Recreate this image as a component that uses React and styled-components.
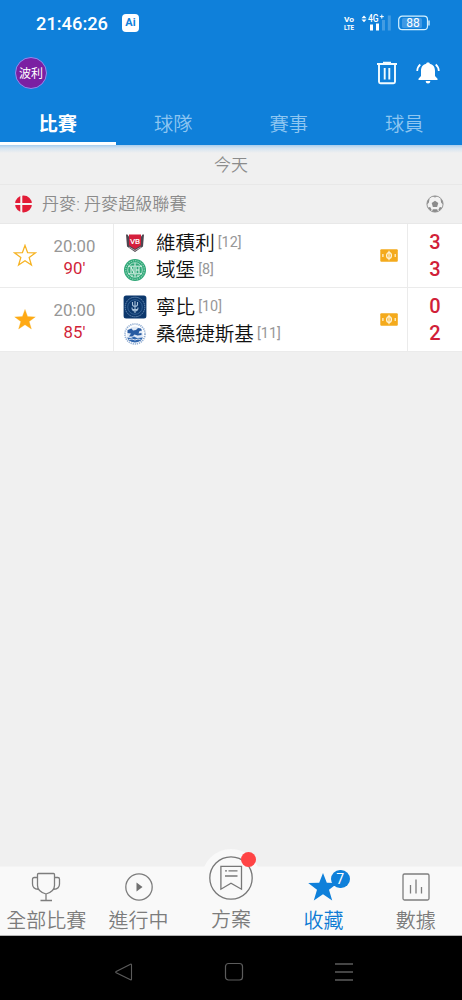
import React from 'react';
import styled, { createGlobalStyle } from 'styled-components';

const GlobalStyle = createGlobalStyle`
  * {
    box-sizing: border-box;
  }
  body {
    margin: 0;
    background: #f0f0f0;
    font-family: Roboto, "Noto Sans CJK TC", sans-serif;
    font-weight: 350;
  }
  svg {
    display: block;
    flex: none;
  }
`;

const Screen = styled.div`
  width: 462px;
  height: 1000px;
  display: flex;
  flex-direction: column;
  overflow: hidden;
  background: #f0f0f0;
`;

const Header = styled.header`
  height: 145px;
  flex: none;
  display: flex;
  flex-direction: column;
  background: #0f80da;
`;

const StatusBar = styled.div`
  height: 46px;
  padding: 0 32px 0 36px;
  display: flex;
  align-items: center;
  color: #fff;
`;

const Clock = styled.span`
  width: 86px;
  padding-top: 1px;
  font: 500 18.3px/22px Roboto, sans-serif;
  white-space: nowrap;
`;

const AiBadge = styled.span`
  width: 17px;
  height: 18px;
  border-radius: 4px;
  background: #fff;
  color: #0f80da;
  font: 700 11px/18px Roboto, sans-serif;
  text-align: center;
`;

const Signals = styled.div`
  margin-left: auto;
  display: flex;
  align-items: center;
  gap: 7px;
`;

const Toolbar = styled.div`
  height: 54px;
  padding: 0 22px 0 15px;
  display: flex;
  align-items: center;
`;

const Avatar = styled.div`
  width: 32px;
  height: 32px;
  margin-right: auto;
  border: 1.5px solid #8f8cf0;
  border-radius: 50%;
  background: #7b1fa2;
  color: #fff;
  font-size: 12px;
  font-weight: 400;
  line-height: 32px;
  text-align: center;
`;

const Actions = styled.div`
  display: flex;
  gap: 18px;
`;

const Tabs = styled.nav`
  height: 45px;
  display: grid;
  grid-template-columns: repeat(4, 1fr);
`;

const Tab = styled.div`
  height: 45px;
  padding-top: 2px;
  border-bottom: 3px solid ${({ $active }) => ($active ? '#fff' : 'transparent')};
  color: ${({ $active }) => ($active ? '#fff' : '#8ec6f1')};
  font-size: 19.3px;
  font-weight: ${({ $active }) => ($active ? 700 : 350)};
  line-height: 45px;
  text-align: center;
`;

const DayTitle = styled.div`
  height: 40px;
  flex: none;
  border-bottom: 1px solid #e8e8e8;
  background: linear-gradient(#a9cdec 0, #d3e3f1 3px, #f0f0f0 8px);
  color: #8b8b8b;
  font-size: 17px;
  line-height: 41px;
  text-align: center;
`;

const League = styled.div`
  height: 39px;
  flex: none;
  padding: 0 18px 0 14px;
  display: flex;
  align-items: center;
  border-bottom: 1px solid #e8e8e8;
  color: #8b8b8b;
  font-size: 17.1px;
  line-height: 39px;
`;

const LeagueName = styled.span`
  margin: 0 auto 0 9px;
`;

const Match = styled.div`
  height: 64px;
  flex: none;
  display: flex;
  border-bottom: 1px solid #ebebeb;
  background: #fff;
`;

const StarCell = styled.div`
  width: 49px;
  padding-top: 1px;
  display: flex;
  align-items: center;
  justify-content: center;
`;

const TimeCell = styled.div`
  width: 65px;
  padding: 11px 13px 0 0;
  border-right: 1px solid #ebebeb;
  font-size: 16.8px;
  font-weight: 400;
  line-height: 22px;
  text-align: center;
  white-space: nowrap;
`;

const Kickoff = styled.div`
  color: #979797;
`;

const Minute = styled.div`
  color: #d11f39;
`;

const Teams = styled.div`
  flex: 1;
  padding: 5px 0 0 9px;
`;

const Team = styled.div`
  height: 27px;
  display: flex;
  align-items: center;
`;

const TeamName = styled.span`
  margin: 2px 3px 0 9px;
  color: #111;
  font-size: 19.6px;
  line-height: 27px;
`;

const Rank = styled.span`
  padding-top: 1px;
  color: #979797;
  font-size: 14.4px;
  font-weight: 400;
  line-height: 26px;
`;

const TicketCell = styled.div`
  width: 27px;
  display: flex;
  align-items: center;
`;

const Scores = styled.div`
  width: 55px;
  padding-top: 5px;
  border-left: 1px solid #ebebeb;
  color: #d11f39;
  font: 500 20px/27px Roboto, sans-serif;
  text-align: center;
`;

const BottomNav = styled.nav`
  height: 70px;
  margin-top: auto;
  flex: none;
  display: grid;
  grid-template-columns: repeat(5, 1fr);
  border-top: 1px solid #f4f4f4;
  border-bottom: 1px solid #b5b5b5;
  background: #f9f9f9;
`;

const NavItem = styled.div`
  position: relative;
  height: 68px;
  display: flex;
  flex-direction: column;
  align-items: center;
  justify-content: flex-end;
  color: ${({ $active }) => ($active ? '#0f7bd4' : '#7c7c7c')};
`;

const NavLabel = styled.span`
  height: 33px;
  font-size: 20px;
  line-height: ${({ $raised }) => ($raised ? 37 : 39)}px;
  white-space: nowrap;
`;

const PlanCircle = styled.div`
  width: 58px;
  height: 58px;
  flex: none;
  margin-bottom: -5px;
  display: flex;
  align-items: center;
  justify-content: center;
  border-radius: 50%;
  background: #f9f9f9;
`;

const RedDot = styled.i`
  position: absolute;
  top: -15px;
  right: 21px;
  width: 15px;
  height: 15px;
  border-radius: 50%;
  background: #ff4445;
`;

const Count = styled.span`
  position: absolute;
  top: 3px;
  right: 20px;
  width: 19px;
  height: 18px;
  border-radius: 9px;
  background: #0f80da;
  color: #fff;
  font-size: 14px;
  font-weight: 400;
  line-height: 18px;
  text-align: center;
`;

const SystemBar = styled.div`
  height: 64px;
  flex: none;
  padding: 7px 108px 0 114px;
  display: flex;
  align-items: center;
  justify-content: space-between;
  background: #000;
`;

const STAR = 'M12 1.4l2.600 7.200 7.700.3-6.100 4.700 2.200 7.400-6.400-4.300-6.400 4.300 2.200-7.400-6.100-4.700 7.700-.3z';

const SignalIcon = () => (
  <svg width="48" height="20" viewBox="0 0 48 20" fill="#fff" fontFamily="Roboto, sans-serif" fontWeight="700">
    <text x="1" y="8.500" fontSize="7" textLength="10" lengthAdjust="spacingAndGlyphs">Vo</text>
    <text x="1" y="17.300" fontSize="7" textLength="10" lengthAdjust="spacingAndGlyphs">LTE</text>
    <path d="M18.500 5.200L21 2.500l2.500 2.700zM18.500 6.500h5L21 9.200z" />
    <g transform="translate(25 9.300) scale(.85 1)">
      <text x="0" y="0" fontSize="10" fontWeight="500">4G</text>
    </g>
    <path d="M38.800 1.600v4M36.800 3.600h4" stroke="#fff" strokeWidth="1" />
    <path d="M27 11.500h3v6h-3zM33 10.500h3v7h-3z" />
    <path d="M39 7h3v10.500h-3zM44.800 2.500h3v15h-3z" opacity=".22" />
  </svg>
);

const BatteryIcon = () => (
  <svg width="32" height="16" viewBox="0 0 32 16">
    <rect x="4" y="3" width="20" height="10" rx="1.500" fill="#3f99e4" />
    <rect x=".7" y="1.200" width="28.800" height="13.500" rx="3.500" fill="none" stroke="#d5f1ff" strokeWidth="1.200" />
    <path d="M31 5.500v5" stroke="#d5f1ff" strokeWidth="1.400" />
    <text x="15" y="12.300" fill="#fff" fontFamily="Roboto, sans-serif" fontSize="12" fontWeight="400" textAnchor="middle">88</text>
  </svg>
);

const TrashIcon = () => (
  <svg width="22" height="24" viewBox="0 0 22 24" fill="none" stroke="#f2fbff" strokeWidth="1.900">
    <path d="M1 3h20M7 1.700h8" />
    <path d="M3 3v17.800q0 1.500 1.500 1.500h13q1.500 0 1.500-1.500V3M8.700 7v11.500M13.300 7v11.500" />
  </svg>
);

const BellIcon = () => (
  <svg width="24" height="24" viewBox="0 0 24 24" fill="#fff">
    <path d="M12 1.500c1.200 0 1.700.5 1.800 1.300 3.700.8 5.200 3.600 5.200 7.100v5l2.500 2.800V19h-19v-1.300L5 14.900v-5c0-3.500 1.500-6.300 5.200-7.100.1-.8.6-1.300 1.800-1.300zM9.700 20h4.600c0 1.700-1 2.500-2.300 2.500S9.700 21.700 9.700 20z" />
    <path d="M4.300 3.500Q1.300 6 1.200 10M19.700 3.500q3 2.500 3.100 6.500" fill="none" stroke="#fff" strokeWidth="1.700" />
  </svg>
);

const DenmarkFlag = () => (
  <svg width="19" height="19" viewBox="0 0 19 19">
    <circle cx="9.500" cy="9" r="8.500" fill="#e21c37" />
    <path d="M7.300 0v19M0 9h19" stroke="#f5f5f5" strokeWidth="2" />
  </svg>
);

const BallIcon = () => (
  <svg width="18" height="18" viewBox="0 0 18 18" fill="#8b8b8b">
    <circle cx="9" cy="9" r="8.100" fill="#f2f2f2" stroke="#999" strokeWidth="1" />
    <path d="M9 5.700l3.300 2.400-1.200 3.800H6.900L5.700 8.100zM1 9.500l1.800-1.700.8-4L1.500 6zM17 9.500l-1.800-1.700-.8-4L16.500 6zM2 12.500l2.200-.4 1.500 2.900-1.500.5zM16 12.500l-2.200-.4-1.500 2.900 1.500.5zM6.800 14.300h4.400l.8 2.200-3 .5-3-.5zM6.500 1.200L9 2.400l2.500-1.200z" />
  </svg>
);

const FavStar = ({ on }) => (
  <svg width="24" height="24" viewBox="0 0 24 24">
    <path d={STAR} fill={on ? '#ffa914' : 'none'} stroke="#f6b323" strokeWidth={on ? 0.3 : 1.3} />
  </svg>
);

const ViborgLogo = () => (
  <svg width="24" height="24" viewBox="0 0 24 24">
    <path d="M3 3.500h1.500l2 3h11l2-3H21l-1 12-8 5.500-8-5.500z" fill="#4d4750" />
    <path d="M6 3.500h12v10.800L12 18l-6-3.700z" fill="#d51f3c" />
    <path d="M6 16l6 3.500 6-3.500" fill="none" stroke="#b9a5a9" strokeWidth="1" />
    <text x="12" y="12.500" fill="#fff" fontFamily="Roboto, sans-serif" fontSize="8" fontWeight="500" textAnchor="middle">VB</text>
  </svg>
);

const ViborgGreenLogo = () => (
  <svg width="24" height="24" viewBox="0 0 24 24" fill="none">
    <circle cx="12" cy="12" r="11" fill="#2fa777" />
    <circle cx="12" cy="12" r="9.300" stroke="#8bd2b3" strokeWidth="1.200" strokeDasharray="1.300 1" />
    <circle cx="12" cy="12" r="7.300" stroke="#d6f1e5" strokeWidth=".7" />
    <path d="M8 9v6M8 9l3 6V9M13 9v6M16 9v6M13 12h3M5 8.200h14M5 15.800h14M12 5v3M9 17v2M12 16v3M15 17v2" stroke="#e6f7ef" strokeWidth="1" />
  </svg>
);

const LyngbyLogo = () => (
  <svg width="24" height="24" viewBox="0 0 24 24" fill="none">
    <rect x=".6" y=".6" width="22.800" height="22.800" rx="2.500" fill="#0c376c" />
    <circle cx="12" cy="12" r="9.800" stroke="#6e91b9" strokeWidth="1" strokeDasharray="1.400 .7" />
    <circle cx="12" cy="12" r="7.300" stroke="#3d6c9e" strokeWidth=".8" />
    <path d="M12 6v12M9.500 7v2.500q0 1.800 2.500 1.800t2.500-1.800V7M9 12.500q0 3.500 3 3.500t3-3.500M10 14.500h4" stroke="#a9c3dc" strokeWidth="1.100" />
  </svg>
);

const SonderjyskeLogo = () => (
  <svg width="24" height="24" viewBox="0 0 24 24" fill="none">
    <circle cx="12" cy="12" r="10" stroke="#91add2" strokeWidth="1.700" strokeDasharray="1.200 .9" />
    <circle cx="12" cy="12.500" r="8" fill="#dfe9f6" />
    <path d="M4.500 8l4-1.500 1.500 2 3-.5 2-2 3 .5 1 2-2.500.5-1 2.500 3-.5v2l-4 .5-3-1-2 2H6l2-3-3.500-.5z" fill="#285ba2" />
    <path d="M4 15.500l4 .5 3-1.500 3 1.500 6-.5-2 3q-6 4-12 0z" fill="#3267ae" />
    <path d="M6 17.500l3-.5 3 1 3-1 2.500.5" stroke="#fff" strokeWidth=".8" />
  </svg>
);

const TicketIcon = () => (
  <svg width="18" height="13" viewBox="0 0 18 13">
    <rect x=".3" y=".2" width="17.500" height="12.500" rx="1" fill="#f4aa1c" />
    <g fill="none" stroke="#fff4d8">
      <ellipse cx="9" cy="6.500" rx="2.400" ry="2.900" strokeWidth="1.300" />
      <path d="M9 1.800v9.400" strokeWidth="1.200" />
      <path d="M2.900 5v3M15.200 5v3" strokeWidth="1.200" />
    </g>
  </svg>
);

const TrophyIcon = () => (
  <svg width="30" height="30" viewBox="0 0 30 30" fill="none" stroke="#7d7d7d" strokeWidth="1.300">
    <path d="M7.500 1.500h15q1 0 1 1v11q0 6-8.500 8.500-8.500-2.500-8.500-8.500v-11q0-1 1-1zM6.500 5.500H3.300Q1.500 5.500 1.500 7.300V12q0 5 5.700 5.300M23.500 5.500h3.200q1.800 0 1.800 1.800V12q0 5-5.700 5.300M15 22v6.500M9.500 28.500h11.500" />
  </svg>
);

const PlayIcon = () => (
  <svg width="30" height="30" viewBox="0 0 30 30">
    <circle cx="15" cy="15" r="13.200" fill="none" stroke="#7d7d7d" strokeWidth="1.300" />
    <path d="M12.500 10.500v9l6-4.500z" fill="#707070" />
  </svg>
);

const PlanIcon = () => (
  <svg width="46" height="46" viewBox="0 0 46 46" fill="none" stroke="#777" strokeWidth="1.300">
    <circle cx="23" cy="23" r="21.200" />
    <path d="M12.900 11.400h20.600v22.800L23 28.200l-10.100 6z" />
    <path d="M17 15.800h2M20.500 15.800h9M17 21h12.500" />
  </svg>
);

const ChartIcon = () => (
  <svg width="30" height="30" viewBox="0 0 30 30" fill="none" stroke="#7d7d7d" strokeWidth="1.300">
    <rect x="2" y="2" width="26" height="26" rx="1.500" />
    <path d="M9.500 13v8.500M15 7.500v14M20.500 15v6.500" />
  </svg>
);

const MATCHES = [
  {
    fav: false,
    time: '20:00',
    minute: "90'",
    home: { name: '維積利', rank: 12, score: 3, logo: <ViborgLogo /> },
    away: { name: '域堡', rank: 8, score: 3, logo: <ViborgGreenLogo /> },
  },
  {
    fav: true,
    time: '20:00',
    minute: "85'",
    home: { name: '寧比', rank: 10, score: 0, logo: <LyngbyLogo /> },
    away: { name: '桑德捷斯基', rank: 11, score: 2, logo: <SonderjyskeLogo /> },
  },
];

const TeamLine = ({ team }) => (
  <Team>
    {team.logo}
    <TeamName>{team.name}</TeamName>
    <Rank>[{team.rank}]</Rank>
  </Team>
);

const MatchRow = ({ match }) => (
  <Match>
    <StarCell><FavStar on={match.fav} /></StarCell>
    <TimeCell>
      <Kickoff>{match.time}</Kickoff>
      <Minute>{match.minute}</Minute>
    </TimeCell>
    <Teams>
      <TeamLine team={match.home} />
      <TeamLine team={match.away} />
    </Teams>
    <TicketCell><TicketIcon /></TicketCell>
    <Scores>
      <div>{match.home.score}</div>
      <div>{match.away.score}</div>
    </Scores>
  </Match>
);

const App = () => (
  <Screen>
    <GlobalStyle />
    <Header>
      <StatusBar>
        <Clock>21:46:26</Clock>
        <AiBadge>Ai</AiBadge>
        <Signals>
          <SignalIcon />
          <BatteryIcon />
        </Signals>
      </StatusBar>
      <Toolbar>
        <Avatar>波利</Avatar>
        <Actions>
          <TrashIcon />
          <BellIcon />
        </Actions>
      </Toolbar>
      <Tabs>
        {['比賽', '球隊', '賽事', '球員'].map((name, i) => (
          <Tab key={name} $active={i === 0}>{name}</Tab>
        ))}
      </Tabs>
    </Header>

    <DayTitle>今天</DayTitle>
    <League>
      <DenmarkFlag />
      <LeagueName>丹麥: 丹麥超級聯賽</LeagueName>
      <BallIcon />
    </League>
    {MATCHES.map((match) => (
      <MatchRow key={match.home.name} match={match} />
    ))}

    <BottomNav>
      <NavItem>
        <TrophyIcon />
        <NavLabel>全部比賽</NavLabel>
      </NavItem>
      <NavItem>
        <PlayIcon />
        <NavLabel>進行中</NavLabel>
      </NavItem>
      <NavItem>
        <PlanCircle><PlanIcon /></PlanCircle>
        <NavLabel $raised>方案</NavLabel>
        <RedDot />
      </NavItem>
      <NavItem $active>
        <svg width="32" height="30" viewBox="0 0 32 30">
          <path d="M16 1l3.800 9.800 11 .2-8.800 6.800 3.200 10.700L16 22.300l-9.200 6.200L10 17.800 1.200 11l11-.2z" fill="#0f80da" />
        </svg>
        <NavLabel>收藏</NavLabel>
        <Count>7</Count>
      </NavItem>
      <NavItem>
        <ChartIcon />
        <NavLabel>數據</NavLabel>
      </NavItem>
    </BottomNav>
    <SystemBar>
      <svg width="20" height="20" viewBox="0 0 20 20" fill="none" stroke="#5c5c5c" strokeWidth="1.100">
        <path d="M16.500 2.200L2.200 9.500q-1 .7 0 1.300l14.300 7q1 .4 1-.7V2.800q0-1-1-.6z" />
      </svg>
      <svg width="20" height="20" viewBox="0 0 20 20" fill="none" stroke="#5c5c5c" strokeWidth="1.200">
        <rect x="1.500" y="1.500" width="17" height="16.500" rx="3" />
      </svg>
      <svg width="20" height="20" viewBox="0 0 20 20" stroke="#5c5c5c" strokeWidth="1.300">
        <path d="M1 2h18M1 10h18M1 18h18" />
      </svg>
    </SystemBar>
  </Screen>
);

export default App;
